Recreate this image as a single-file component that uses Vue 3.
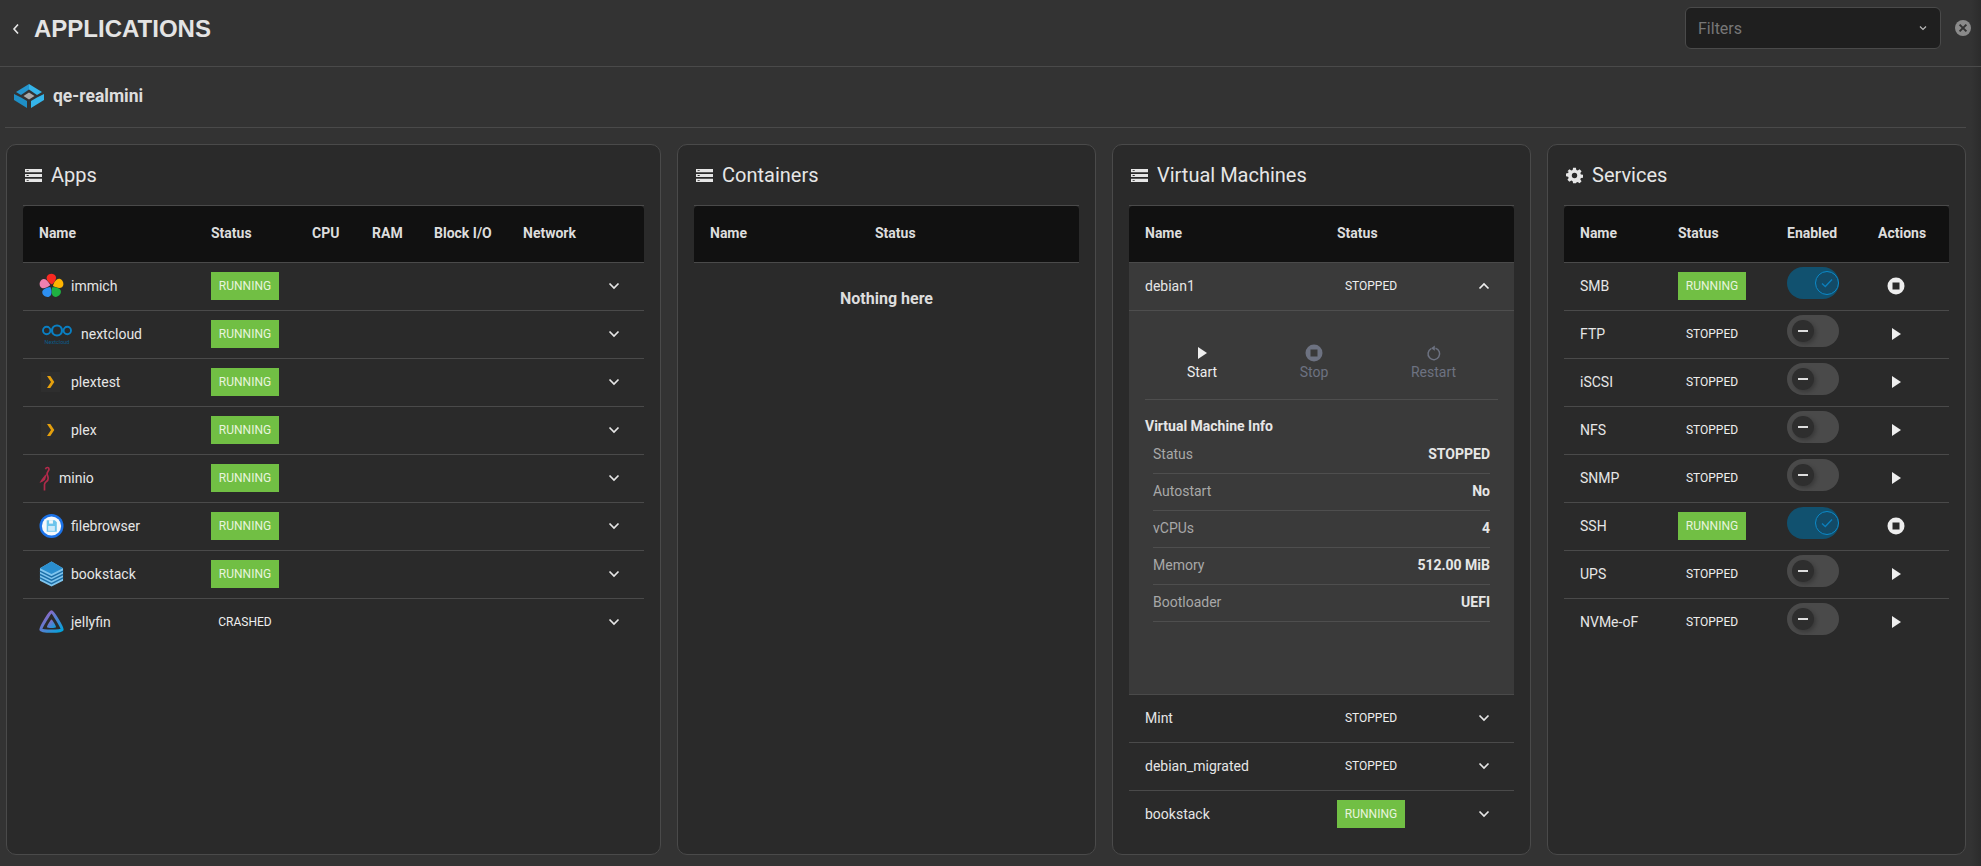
<template>
  <div class="page">
    <header class="topbar">
      <div class="title-wrap">
        <svg class="back" viewBox="0 0 10 14" width="10" height="14"><path d="M7 2.500 3 7l4 4.500" fill="none" stroke="#e8e8e8" stroke-width="1.600" /></svg>
        <h1>APPLICATIONS</h1>
      </div>
      <div class="filter-wrap">
        <div class="filter">
          <span>Filters</span>
          <svg viewBox="0 0 10 10" width="10" height="10"><path d="M2 3.500 5 6.500 8 3.500" fill="none" stroke="#bbb" stroke-width="1.200" /></svg>
        </div>
        <svg class="clear" viewBox="0 0 18 18" width="18" height="18">
          <circle cx="9" cy="9" r="8" fill="#8a8a8a" />
          <path d="M5.600 5.600l6.800 6.800M12.400 5.600l-6.800 6.800" stroke="#333" stroke-width="2" />
        </svg>
      </div>
    </header>

    <div class="system">
      <svg viewBox="0 0 30 24" width="30" height="24" class="sys-logo">
        <path d="M15 0 2 8l5 3 8-5.500z" fill="#2596cf" />
        <path d="M15 0l13 8-5 3-8-5.500z" fill="#35b5ea" />
        <path d="M0 10 7 13.500l6 3.500v7L0 16z" fill="#1f8fc6" />
        <path d="M30 10 23 13.500l-6 3.500v7l13-8z" fill="#35b5ea" />
        <path d="M15 8.500l5.500 3.500-5.500 3.500L9.500 12z" fill="#a9a9a9" />
      </svg>
      <span>qe-realmini</span>
    </div>

    <main class="cards">
      <section class="card apps">
        <h2><svg class="title-icon" viewBox="0 0 16 14" preserveAspectRatio="none"><path d="M0 1h16v3H0zM0 5.500h16v3H0zM0 10h16v3H0z" fill="#e6e6e6" /><path d="M1.500 2.100h2v.8h-2zM1.500 6.600h2v.8h-2zM1.500 11.100h2v.8h-2z" fill="#2a2a2a" /></svg>Apps</h2>
        <div class="table">
          <div class="row head">
            <span>Name</span><span>Status</span><span>CPU</span><span>RAM</span><span>Block I/O</span><span>Network</span><span></span>
          </div>
          <div v-for="app in apps" :key="app.name" class="row">
            <span class="name">
              <svg v-if="app.icon === 'immich'" class="app-icon" viewBox="0 0 26 26" width="25" height="26">
                <path v-for="(color, i) in immichPetals" :key="color" d="M12.500 11C8.500 8 7 5 8.500 2.500 10.500-.5 16-.5 17.500 3 18.500 5.500 16 9 13.500 11.500z" :fill="color" :transform="`rotate(${i * 72} 13 13)`" />
              </svg>
              <svg v-else-if="app.icon === 'nextcloud'" class="app-icon nc" viewBox="0 0 30 26" width="30" height="26">
                <circle cx="4.700" cy="9.500" r="3.700" fill="none" stroke="#0a7fc2" stroke-width="1.900" />
                <circle cx="15" cy="9.500" r="5" fill="none" stroke="#0a7fc2" stroke-width="2.200" />
                <circle cx="25.300" cy="9.500" r="3.700" fill="none" stroke="#0a7fc2" stroke-width="1.900" />
                <text x="15" y="23" text-anchor="middle" font-size="5.500" fill="#0a5c8c">Nextcloud</text>
              </svg>
              <svg v-else-if="app.icon === 'plex'" class="app-icon" viewBox="0 0 25 26" width="25" height="26">
                <rect x="2" y="3" width="19" height="20" fill="#2e2e2e" />
                <path d="M8 7h3.300l4 6-4 6H8l4-6z" fill="#e5a00d" />
              </svg>
              <svg v-else-if="app.icon === 'minio'" class="app-icon minio" viewBox="0 0 12 25" width="12" height="25">
                <path d="M6.500 3.200C7.200 1 9.800 1 10 3c.2 2-2.500 3-1.800 5.500.6 2.200 1.800 3.300.6 5.500-1 1.800-3.300 2.300-3.300 4.500V24.500" fill="none" stroke="#b02a4a" stroke-width="1.700" />
                <path d="M8 7.500C5 10 2 13.500.5 17c2-.8 4-1.800 5.500-3z" fill="#b02a4a" />
              </svg>
              <svg v-else-if="app.icon === 'filebrowser'" class="app-icon" viewBox="0 0 26 26" width="25" height="26">
                <circle cx="13" cy="13" r="12.500" fill="#1b72e8" />
                <circle cx="13" cy="13" r="10" fill="#f4f8fb" />
                <path d="M8 7h8.500L18.500 9v10H8z" fill="#6cc4ec" />
                <rect x="10.500" y="7" width="4" height="3.500" fill="#f4f8fb" />
                <rect x="9.500" y="13" width="7" height="5" fill="#cdeafa" />
              </svg>
              <svg v-else-if="app.icon === 'bookstack'" class="app-icon" viewBox="0 0 26 28" width="25" height="28">
                <path d="M13 1 25 8v13l-12 6-12-6V8z" fill="#7fc5ee" />
                <path d="M13 1 25 8l-12 6L1 8z" fill="#2a8fd0" />
                <path d="M1 11l12 6 12-6M1 14.500l12 6 12-6M1 18l12 6 12-6" fill="none" stroke="#1d6fa8" stroke-width="1.500" />
              </svg>
              <svg v-else class="app-icon" viewBox="0 0 26 26" width="25" height="26">
                <defs>
                  <linearGradient id="jf" x1="0" y1="0" x2="1" y2="1">
                    <stop offset="0" stop-color="#aa5cc3" />
                    <stop offset="1" stop-color="#00a4dc" />
                  </linearGradient>
                </defs>
                <path d="M13 2.500C11.500 2.500 1.500 19 2 21c.6 2 21.400 2 22 0 .5-2-9.500-18.500-11-18.500z" fill="none" stroke="url(#jf)" stroke-width="3.200" />
                <path d="M13 10.500c-.8 0-5 7-4.700 8 .3 1 9.100 1 9.400 0 .3-1-3.900-8-4.700-8z" fill="url(#jf)" />
              </svg>
              <span>{{ app.name }}</span>
            </span>
            <span class="status-cell"><span class="status" :class="{ running: app.status === 'RUNNING' }">{{ app.status }}</span></span>
            <span></span><span></span><span></span><span></span>
            <span class="chev"><svg viewBox="0 0 12 8" width="12" height="8"><path d="M1.500 1.500 6 6l4.500-4.500" fill="none" stroke="#e6e6e6" stroke-width="1.700" /></svg></span>
          </div>
        </div>
      </section>

      <section class="card containers">
        <h2><svg class="title-icon" viewBox="0 0 16 14" preserveAspectRatio="none"><path d="M0 1h16v3H0zM0 5.500h16v3H0zM0 10h16v3H0z" fill="#e6e6e6" /><path d="M1.500 2.100h2v.8h-2zM1.500 6.600h2v.8h-2zM1.500 11.100h2v.8h-2z" fill="#2a2a2a" /></svg>Containers</h2>
        <div class="table">
          <div class="row head"><span>Name</span><span>Status</span></div>
          <p class="empty">Nothing here</p>
        </div>
      </section>

      <section class="card vms">
        <h2><svg class="title-icon" viewBox="0 0 16 14" preserveAspectRatio="none"><path d="M0 1h16v3H0zM0 5.500h16v3H0zM0 10h16v3H0z" fill="#e6e6e6" /><path d="M1.500 2.100h2v.8h-2zM1.500 6.600h2v.8h-2zM1.500 11.100h2v.8h-2z" fill="#2a2a2a" /></svg>Virtual Machines</h2>
        <div class="table">
          <div class="row head"><span>Name</span><span>Status</span><span></span></div>
          <div class="open">
            <div class="row">
              <span class="name">debian1</span>
              <span class="status-cell"><span class="status">STOPPED</span></span>
              <span class="chev"><svg viewBox="0 0 12 8" width="12" height="8"><path d="M1.500 6.500 6 2l4.500 4.500" fill="none" stroke="#eee" stroke-width="1.700" /></svg></span>
            </div>
            <div class="detail">
              <div class="actions">
                <div class="action">
                  <svg viewBox="0 0 18 18" width="18" height="18"><path d="M5 3v12l9-6z" fill="#eee" /></svg>
                  <span>Start</span>
                </div>
                <div class="action off">
                  <svg viewBox="0 0 18 18" width="18" height="18"><circle cx="9" cy="9" r="8.500" fill="#6d7281" /><rect x="5.500" y="5.500" width="7" height="7" fill="#3a3a3a" /></svg>
                  <span>Stop</span>
                </div>
                <div class="action off">
                  <svg viewBox="0 0 18 18" width="18" height="18"><path d="M10.500 4.300a5.800 5.800 0 1 1-4.300.4" fill="none" stroke="#6d7281" stroke-width="1.500" /><path d="M9.800 1.500v5.200L6 4.200z" fill="#6d7281" /></svg>
                  <span>Restart</span>
                </div>
              </div>
              <h3>Virtual Machine Info</h3>
              <div v-for="info in vmInfo" :key="info[0]" class="info-row">
                <span>{{ info[0] }}</span><b>{{ info[1] }}</b>
              </div>
            </div>
          </div>
          <div v-for="vm in vms" :key="vm.name" class="row">
            <span class="name">{{ vm.name }}</span>
            <span class="status-cell"><span class="status" :class="{ running: vm.status === 'RUNNING' }">{{ vm.status }}</span></span>
            <span class="chev"><svg viewBox="0 0 12 8" width="12" height="8"><path d="M1.500 1.500 6 6l4.500-4.500" fill="none" stroke="#e6e6e6" stroke-width="1.700" /></svg></span>
          </div>
        </div>
      </section>

      <section class="card services">
        <h2>
          <svg class="title-icon gear" viewBox="0 0 24 24"><path d="M10 1h4l.6 3.100 1.900.8 2.700-1.800 2.800 2.800-1.800 2.700.8 1.900 3 .5v4l-3 .6-.8 1.900 1.800 2.600-2.800 2.800-2.700-1.700-1.900.8L14 23h-4l-.6-3-1.900-.8-2.700 1.700L2 18.100l1.800-2.600-.8-1.900-3-.6v-4l3-.5.8-1.900L2 5.900l2.800-2.800 2.700 1.800 1.900-.8z" fill="#e6e6e6" /><circle cx="12" cy="12" r="3.800" fill="#2a2a2a" /></svg>
          Services
        </h2>
        <div class="table">
          <div class="row head"><span>Name</span><span>Status</span><span>Enabled</span><span>Actions</span></div>
          <div v-for="svc in services" :key="svc.name" class="row">
            <span class="name">{{ svc.name }}</span>
            <span class="status-cell"><span class="status" :class="{ running: svc.on }">{{ svc.on ? 'RUNNING' : 'STOPPED' }}</span></span>
            <span class="toggle-cell">
              <span class="toggle" :class="{ on: svc.on }">
                <span class="knob">
                  <svg v-if="svc.on" viewBox="0 0 12 10" width="12" height="10"><path d="M1 5.500 4.300 8.500 11 1.500" fill="none" stroke="#0c7fbc" stroke-width="1.300" /></svg>
                  <i v-else></i>
                </span>
              </span>
            </span>
            <span class="act-cell">
              <svg v-if="svc.on" viewBox="0 0 18 18" width="18" height="18"><circle cx="9" cy="9" r="8.500" fill="#eee" /><rect x="5.500" y="5.500" width="7" height="7" fill="#2a2a2a" /></svg>
              <svg v-else viewBox="0 0 18 18" width="18" height="18"><path d="M5 3v12l9-6z" fill="#eee" /></svg>
            </span>
          </div>
        </div>
      </section>
    </main>
  </div>
</template>

<script setup>
const immichPetals = ['#fa2921', '#ffb400', '#1fb141', '#2d8ff0', '#f280b0']

const apps = [
  { name: 'immich', icon: 'immich', status: 'RUNNING' },
  { name: 'nextcloud', icon: 'nextcloud', status: 'RUNNING' },
  { name: 'plextest', icon: 'plex', status: 'RUNNING' },
  { name: 'plex', icon: 'plex', status: 'RUNNING' },
  { name: 'minio', icon: 'minio', status: 'RUNNING' },
  { name: 'filebrowser', icon: 'filebrowser', status: 'RUNNING' },
  { name: 'bookstack', icon: 'bookstack', status: 'RUNNING' },
  { name: 'jellyfin', icon: 'jellyfin', status: 'CRASHED' },
]

const vmInfo = [
  ['Status', 'STOPPED'],
  ['Autostart', 'No'],
  ['vCPUs', '4'],
  ['Memory', '512.00 MiB'],
  ['Bootloader', 'UEFI'],
]

const vms = [
  { name: 'Mint', status: 'STOPPED' },
  { name: 'debian_migrated', status: 'STOPPED' },
  { name: 'bookstack', status: 'RUNNING' },
]

const services = [
  { name: 'SMB', on: true },
  { name: 'FTP', on: false },
  { name: 'iSCSI', on: false },
  { name: 'NFS', on: false },
  { name: 'SNMP', on: false },
  { name: 'SSH', on: true },
  { name: 'UPS', on: false },
  { name: 'NVMe-oF', on: false },
]
</script>

<style>
html,
body {
  margin: 0;
  background: #333;
}
</style>

<style scoped>
.page {
  height: 866px;
  overflow: hidden;
  box-sizing: border-box;
  background: linear-gradient(to right, #333 calc(100% - 10px), #2c2c2c);
  color: #e6e6e6;
  font-family: Roboto, "Liberation Sans", sans-serif;
  font-size: 14px;
}

.topbar {
  height: 66px;
  display: flex;
  justify-content: space-between;
  align-items: flex-start;
  border-bottom: 1px solid #4a4a4a;
}

.title-wrap {
  display: flex;
  align-items: center;
  height: 58px;
  padding-left: 11px;
}

.back {
  margin-right: 13px;
}

h1 {
  margin: 0;
  font-family: "Liberation Sans", sans-serif;
  font-size: 24px;
  font-weight: 700;
  color: #e4e4e4;
}

.filter-wrap {
  display: flex;
  align-items: center;
  padding: 7px 9px 0 0;
}

.filter {
  width: 256px;
  height: 42px;
  box-sizing: border-box;
  display: flex;
  align-items: center;
  justify-content: space-between;
  padding: 0 12px 0 12px;
  background: #1f1f1f;
  border: 1px solid #4a4a4a;
  border-radius: 6px;
  color: #777;
  font-size: 16px;
}

.clear {
  margin-left: 13px;
}

.system {
  height: 58px;
  padding: 0 0 2px 9px;
  margin-left: 5px;
  margin-right: 15px;
  display: flex;
  align-items: center;
  border-bottom: 1px solid #4a4a4a;
  font-size: 17.500px;
  font-weight: 700;
  color: #ddd;
}

.sys-logo {
  margin-right: 9px;
}

.cards {
  display: grid;
  grid-template-columns: 655px 419px 419px 419px;
  column-gap: 16px;
  padding: 16px 0 0 6px;
}

.card {
  height: 711px;
  box-sizing: border-box;
  padding: 0 16px;
  background: #2a2a2a;
  border: 1px solid #4a4a4a;
  border-radius: 10px;
}

h2 {
  margin: 0;
  height: 60px;
  display: flex;
  align-items: center;
  gap: 9px;
  padding-left: 2px;
  font-size: 20px;
  font-weight: 400;
  color: #e6e6e6;
}

.title-icon {
  width: 17px;
  height: 15px;
}

.gear {
  height: 17px;
}

.table {
  border-top: 1px solid #4a4a4a;
}

.row {
  display: grid;
  height: 48px;
  align-items: center;
  box-sizing: border-box;
  border-bottom: 1px solid #4a4a4a;
  padding: 0 0 1px 16px;
}

.head {
  height: 57px;
  padding-bottom: 2px;
  background: #111;
  font-weight: 700;
  color: #ddd;
  border-radius: 4px 4px 0 0;
}

.apps .row {
  grid-template-columns: 172px 101px 60px 62px 89px 60px 1fr;
}

.containers .row {
  grid-template-columns: 165px 1fr;
}

.vms .row {
  grid-template-columns: 192px 1fr 60px;
}

.services .row {
  grid-template-columns: 98px 109px 91px 1fr;
}

.vms .row:last-child,
.apps .row:last-child,
.services .row:last-child {
  border-bottom-color: transparent;
}

.name {
  display: flex;
  align-items: center;
  font-size: 14px;
  color: #e6e6e6;
}

.app-icon {
  margin-right: 7px;
  flex: none;
}

.nc {
  margin-left: 3px;
  margin-right: 9px;
}

.minio {
  margin-right: 8px;
}

.status {
  display: inline-block;
  width: 68px;
  height: 28px;
  line-height: 28px;
  text-align: center;
  font-size: 12px;
  color: #eee;
}

.status.running {
  background: #71bf44;
  color: #e8f4dd;
}

.chev {
  display: flex;
  justify-content: center;
}

.empty {
  margin: 0;
  padding-top: 26px;
  text-align: center;
  font-weight: 700;
  font-size: 16px;
  color: #ddd;
}

.open {
  background: #3a3a3a;
  height: 432px;
  border-bottom: 1px solid #4a4a4a;
  box-sizing: border-box;
}

.open .row {
  border-bottom-color: #4e4e4e;
}

.detail {
  padding: 0 16px;
}

.actions {
  display: grid;
  grid-template-columns: 114px 110px 1fr;
  height: 89px;
  padding-top: 33px;
  box-sizing: border-box;
  border-bottom: 1px solid #4e4e4e;
}

.action {
  display: flex;
  flex-direction: column;
  align-items: center;
  gap: 2px;
  color: #eee;
}

.action.off {
  color: #6d7281;
}

h3 {
  margin: 18px 0 3px;
  font-size: 14px;
  font-weight: 700;
  line-height: 16px;
  color: #e6e6e6;
}

.info-row {
  display: flex;
  justify-content: space-between;
  align-items: center;
  height: 37px;
  box-sizing: border-box;
  margin: 0 8px;
  padding-bottom: 3px;
  border-bottom: 1px solid #4e4e4e;
  color: #a8a8a8;
}

.info-row b {
  color: #e6e6e6;
}

.toggle {
  display: block;
  position: relative;
  width: 52px;
  height: 32px;
  margin-top: -7px;
  border-radius: 16px;
  background: #4a4a4a;
}

.toggle.on {
  background: #11516f;
}

.knob {
  position: absolute;
  top: 5px;
  left: 5px;
  width: 22px;
  height: 22px;
  border-radius: 50%;
  background: #2e2e2e;
  box-shadow: 2px 2px 4px rgba(0, 0, 0, 0.25);
  display: flex;
  align-items: center;
  justify-content: center;
}

.toggle.on .knob {
  top: 4px;
  left: 28px;
  width: 24px;
  height: 24px;
  box-sizing: border-box;
  background: #134a66;
  border: 1px solid #0c8ac9;
  box-shadow: none;
}

.knob i {
  display: block;
  width: 10px;
  height: 2px;
  background: #ddd;
}

.act-cell {
  display: flex;
  padding-left: 9px;
}
</style>
